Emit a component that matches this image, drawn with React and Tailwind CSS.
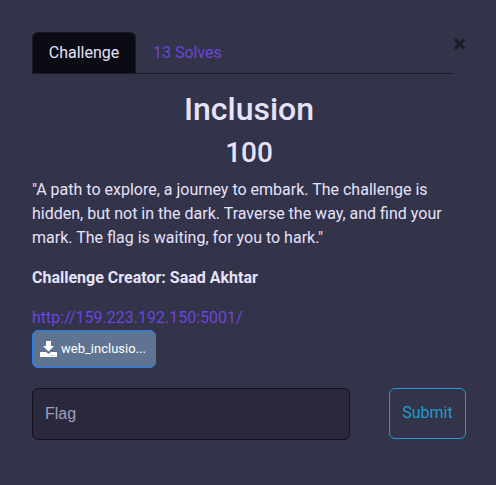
function DownloadIcon() {
  return (
    <svg viewBox="0 0 17 16" className="h-4 w-[17px] shrink-0 fill-white" aria-hidden="true">
      <path d="M6 0h5v5h3L8.5 10.6 3 5h3z" />
      <path d="M.5 11H6l2.5 2L11 11h5.5l.5.5v4l-.5.5H.5l-.5-.5v-4z" />
      <path className="fill-[#a3b2c4]" d="M11 14h2v1h-2zM14 14h1v1h-1z" />
    </svg>
  );
}

function Tabs() {
  return (
    <div className="flex items-start">
      <nav role="tablist" className="flex flex-1 border-b border-[#191924]">
        <button
          type="button"
          role="tab"
          aria-selected="true"
          className="h-[41px] w-[104px] rounded-t-md border border-b-0 border-[#191924] bg-[#0b0b14] text-[#e5e2fb]"
        >
          Challenge
        </button>
        <button
          type="button"
          role="tab"
          aria-selected="false"
          className="h-[41px] px-[17px] text-[#6a46dc]"
        >
          13 Solves
        </button>
      </nav>
      <button
        type="button"
        aria-label="Close"
        className="w-[13px] text-2xl leading-6 font-bold text-[#1b1b25]"
      >
        ×
      </button>
    </div>
  );
}

export default function App() {
  return (
    <div className="min-h-screen bg-[#33334a] pt-8 pr-[30px] pb-11 pl-8 font-['Roboto','Liberation_Sans',sans-serif] text-base text-[#e5e2fb]">
      <Tabs />
      <h2 className="mt-4 mb-2 text-center text-[32px] leading-[38px] font-medium">Inclusion</h2>
      <h3 className="mb-2 text-center text-[28px] leading-[34px] font-medium">100</h3>
      <p className="mb-4">
        "A path to explore, a journey to embark. The challenge is hidden, but not in the dark. Traverse
        the way, and find your mark. The flag is waiting, for you to hark."
      </p>
      <p className="mb-4 font-bold">Challenge Creator: Saad Akhtar</p>
      <a href="http://159.223.192.150:5001/" className="block text-[#6a46dc]">
        http://159.223.192.150:5001/
      </a>
      <a
        href="#web_inclusion"
        className="flex h-[38px] w-[124px] items-center gap-1 rounded-md border border-[#2380f7] bg-[#5e7491] px-[7px] text-[13px] text-white"
      >
        <DownloadIcon />
        <span>web_inclusio...</span>
      </a>
      <form className="mt-5 flex items-start justify-between gap-[39px]" onSubmit={(e) => e.preventDefault()}>
        <input
          type="text"
          aria-label="Flag"
          placeholder="Flag"
          className="h-[52px] min-w-0 flex-1 rounded-md border border-[#12121a] bg-[#29283d] px-3 font-['Liberation_Sans',Arial,sans-serif] outline-none placeholder:text-[#a19ebb]"
        />
        <button
          type="submit"
          className="h-[51px] w-[77px] rounded-md border border-[#1f9bcf] pb-0.5 text-[#1f9bcf]"
        >
          Submit
        </button>
      </form>
    </div>
  );
}
